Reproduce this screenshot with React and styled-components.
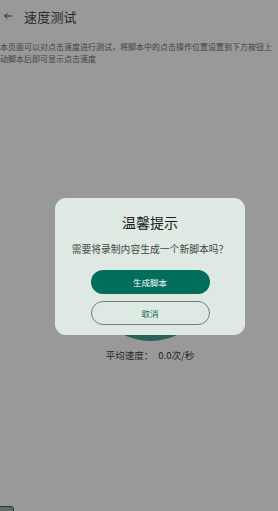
import React from 'react'
import styled, { createGlobalStyle } from 'styled-components'

const GlobalStyle = createGlobalStyle`
  html, body {
    margin: 0;
    padding: 0;
    background: #ffffff;
    font-family: "Noto Sans CJK SC", "Noto Sans", sans-serif;
  }
`

const Page = styled.div`
  width: 278px;
  height: 511px;
  overflow: hidden;
  background: #ffffff;
  position: relative;
`

const Header = styled.div`
  display: flex;
  align-items: center;
  height: 32px;
  padding-left: 3px;
  gap: 11px;
  color: #484848;
`

const BackArrow = styled.svg`
  width: 10px;
  height: 10px;
  flex-shrink: 0;
`

const Title = styled.h1`
  margin: 0;
  font-size: 13px;
  font-weight: 400;
  letter-spacing: 0.2px;
`

const Description = styled.div`
  margin-top: 9px;
  font-size: 8px;
  line-height: 12px;
  color: #6e6e6e;
  white-space: nowrap;
`

const Main = styled.div`
  display: flex;
  flex-direction: column;
  align-items: center;
  padding-left: 22px;
  margin-top: 153px;
`

const TapCircle = styled.div`
  width: 123px;
  height: 123px;
  border-radius: 50%;
  background: #4ca293;
`

const Speed = styled.div`
  margin-top: 7px;
  font-size: 9.5px;
  color: #3c3c3c;
  display: flex;
  gap: 5px;
`

const FloatTab = styled.div`
  position: absolute;
  left: -6px;
  bottom: -21px;
  width: 18px;
  height: 24px;
  border-radius: 3px;
  border: 1px solid #3f5d58;
  background: #a9b2b0;
`

const Scrim = styled.div`
  position: absolute;
  inset: 0;
  background: rgba(0, 0, 0, 0.4);
  display: flex;
  align-items: center;
  justify-content: center;
  padding: 22px 0 0 22px;
  box-sizing: border-box;
`

const Dialog = styled.div`
  width: 190px;
  height: 137px;
  box-sizing: border-box;
  border-radius: 11px;
  background: #dfe9e4;
  display: flex;
  flex-direction: column;
  align-items: center;
  padding-top: 14px;
`

const DialogTitle = styled.div`
  font-size: 14px;
  line-height: 20px;
  color: #1b1d1c;
`

const Message = styled.div`
  margin-top: 10px;
  font-size: 9.8px;
  line-height: 14px;
  color: #3e4743;
`

const Button = styled.button`
  width: 119px;
  height: 24px;
  border-radius: 12px;
  box-sizing: border-box;
  font-family: inherit;
  font-size: 8.5px;
  padding: 0;
  cursor: pointer;
  border: ${p => (p.$primary ? 'none' : '1px solid #777c7a')};
  background: ${p => (p.$primary ? '#016d5b' : 'transparent')};
  color: ${p => (p.$primary ? '#ffffff' : '#016d5b')};
  margin-top: ${p => p.$gap}px;
`

export default function App() {
  return (
    <Page>
      <GlobalStyle />
      <Header>
        <BackArrow viewBox="0 0 24 24" fill="none" stroke="currentColor" strokeWidth="2.4" strokeLinecap="round" strokeLinejoin="round">
          <path d="M20 12H4" />
          <path d="M10 6l-6 6 6 6" />
        </BackArrow>
        <Title>速度测试</Title>
      </Header>
      <Description>
        <div>本页面可以对点击速度进行测试，将脚本中的点击操作位置设置到下方按钮上</div>
        <div>动脚本后即可显示点击速度</div>
      </Description>
      <Main>
        <TapCircle />
        <Speed>
          <span>平均速度：</span>
          <span>0.0次/秒</span>
        </Speed>
      </Main>
      <FloatTab />
      <Scrim>
        <Dialog>
          <DialogTitle>温馨提示</DialogTitle>
          <Message>需要将录制内容生成一个新脚本吗？</Message>
          <Button $primary $gap={14}>生成脚本</Button>
          <Button $gap={7}>取消</Button>
        </Dialog>
      </Scrim>
    </Page>
  )
}
